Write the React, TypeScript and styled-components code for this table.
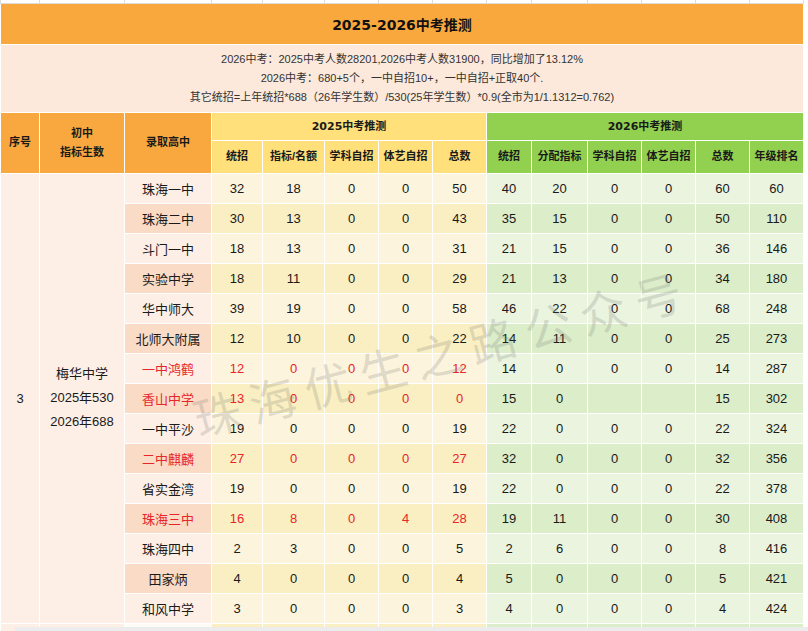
import * as React from "react";
import styled, { createGlobalStyle } from "styled-components";

type Row = {
  school: string;
  hot: boolean;
  y25: (number | string)[];
  y26: (number | string)[];
};

const rows: Row[] = [
  { school: "珠海一中", hot: false, y25: [32, 18, 0, 0, 50], y26: [40, 20, 0, 0, 60, 60] },
  { school: "珠海二中", hot: false, y25: [30, 13, 0, 0, 43], y26: [35, 15, 0, 0, 50, 110] },
  { school: "斗门一中", hot: false, y25: [18, 13, 0, 0, 31], y26: [21, 15, 0, 0, 36, 146] },
  { school: "实验中学", hot: false, y25: [18, 11, 0, 0, 29], y26: [21, 13, 0, 0, 34, 180] },
  { school: "华中师大", hot: false, y25: [39, 19, 0, 0, 58], y26: [46, 22, 0, 0, 68, 248] },
  { school: "北师大附属", hot: false, y25: [12, 10, 0, 0, 22], y26: [14, 11, 0, 0, 25, 273] },
  { school: "一中鸿鹤", hot: true, y25: [12, 0, 0, 0, 12], y26: [14, 0, 0, 0, 14, 287] },
  { school: "香山中学", hot: true, y25: [13, 0, 0, 0, 0], y26: [15, 0, "", "", 15, 302] },
  { school: "一中平沙", hot: false, y25: [19, 0, 0, 0, 19], y26: [22, 0, 0, 0, 22, 324] },
  { school: "二中麒麟", hot: true, y25: [27, 0, 0, 0, 27], y26: [32, 0, 0, 0, 32, 356] },
  { school: "省实金湾", hot: false, y25: [19, 0, 0, 0, 19], y26: [22, 0, 0, 0, 22, 378] },
  { school: "珠海三中", hot: true, y25: [16, 8, 0, 4, 28], y26: [19, 11, 0, 0, 30, 408] },
  { school: "珠海四中", hot: false, y25: [2, 3, 0, 0, 5], y26: [2, 6, 0, 0, 8, 416] },
  { school: "田家炳", hot: false, y25: [4, 0, 0, 0, 4], y26: [5, 0, 0, 0, 5, 421] },
  { school: "和风中学", hot: false, y25: [3, 0, 0, 0, 3], y26: [4, 0, 0, 0, 4, 424] },
];

const widths = [39, 85, 87, 51, 62, 54, 54, 54, 45, 56, 54, 54, 54, 54];

const head25 = ["统招", "指标/名额", "学科自招", "体艺自招", "总数"];
const head26 = ["统招", "分配指标", "学科自招", "体艺自招", "总数", "年级排名"];

const fill = {
  peach: ["#fdefe6", "#f9dbc6"],
  yellow: ["#fdf4dd", "#faefc2"],
  green: ["#eaf4df", "#dcedca"],
};

export default function App() {
  return (
    <Page>
      <GlobalStyle />
      <Sheet>
        <colgroup>
          {widths.map((w, i) => (
            <col key={i} style={{ width: w }} />
          ))}
        </colgroup>
        <tbody>
          <EdgeRow>
            {widths.map((_, i) => (
              <td key={i} />
            ))}
          </EdgeRow>
          <tr>
            <Title colSpan={14}>2025-2026中考推测</Title>
          </tr>
          <tr>
            <Notes colSpan={14}>
              2026中考：2025中考人数28201,2026中考人数31900，同比增加了13.12%
              <br />
              2026中考：680+5个，一中自招10+，一中自招+正取40个.
              <br />
              其它统招=上年统招*688（26年学生数）/530(25年学生数）*0.9(全市为1/1.1312=0.762)
            </Notes>
          </tr>
          <HeadRow $h={28}>
            <HeadCell $bg="#f9a83f" rowSpan={2}>序号</HeadCell>
            <HeadCell $bg="#f9a83f" rowSpan={2}>
              初中
              <br />
              指标生数
            </HeadCell>
            <HeadCell $bg="#f9a83f" rowSpan={2}>录取高中</HeadCell>
            <GroupCell $bg="#ffe07b" colSpan={5}>2025中考推测</GroupCell>
            <GroupCell $bg="#92d050" colSpan={6}>2026中考推测</GroupCell>
          </HeadRow>
          <HeadRow $h={33}>
            {head25.map((h) => (
              <HeadCell key={"a" + h} $bg="#ffe07b">{h}</HeadCell>
            ))}
            {head26.map((h) => (
              <HeadCell key={"b" + h} $bg="#92d050">{h}</HeadCell>
            ))}
          </HeadRow>
          {rows.map((r, i) => {
            const k = i % 2;
            return (
              <BodyRow key={r.school}>
                {i === 0 && (
                  <>
                    <Cell $bg={fill.peach[0]} rowSpan={rows.length}>3</Cell>
                    <Merged $bg={fill.peach[0]} rowSpan={rows.length}>
                      梅华中学
                      <br />
                      2025年530
                      <br />
                      2026年688
                    </Merged>
                  </>
                )}
                <Cell $bg={fill.peach[k]} $red={r.hot}>{r.school}</Cell>
                {r.y25.map((v, j) => (
                  <Cell key={"a" + j} $bg={fill.yellow[k]} $red={r.hot}>{v}</Cell>
                ))}
                {r.y26.map((v, j) => (
                  <Cell key={"b" + j} $bg={fill.green[k]}>{v}</Cell>
                ))}
              </BodyRow>
            );
          })}
          <BodyRow>
            <Cell $bg={fill.peach[0]} />
            <Cell $bg={fill.peach[0]} />
            <Cell $bg="#fffaf6" />
            {head25.map((h) => (
              <Cell key={"c" + h} $bg={fill.yellow[1]} />
            ))}
            {head26.map((h) => (
              <Cell key={"d" + h} $bg={fill.green[1]} />
            ))}
          </BodyRow>
        </tbody>
      </Sheet>
      <Watermark>珠海优生之路公众号</Watermark>
      <ScrollBar />
    </Page>
  );
}

// styled components
const GlobalStyle = createGlobalStyle`
  html, body {
    margin: 0;
    padding: 0;
    background: #ffffff;
  }
  body {
    font-family: "Liberation Sans", "Noto Sans CJK SC", sans-serif;
    color: #1a1a1a;
  }
`;

const Page = styled.div`
  position: relative;
  width: 808px;
  height: 631px;
  overflow: hidden;
  background: #ffffff;
`;

const Sheet = styled.table`
  width: 803px;
  table-layout: fixed;
  border-collapse: collapse;

  td {
    border: 1px solid #ffffff;
    padding: 0;
    text-align: center;
    vertical-align: middle;
  }
`;

const EdgeRow = styled.tr`
  height: 3px;

  td {
    border: 1px solid #dcdcdc;
    border-top: none;
    background: #ffffff;
  }
`;

const Title = styled.td`
  height: 40px;
  background: #f9a83d;
  font-family: "DejaVu Sans", "Noto Sans CJK SC", sans-serif;
  font-size: 14px;
  font-weight: bold;
  color: #111;
`;

const Notes = styled.td`
  height: 67px;
  background: #fce9db;
  font-size: 11px;
  line-height: 19px;
  color: #333;
`;

const HeadRow = styled.tr<{ $h: number }>`
  height: ${(p) => p.$h}px;
`;

const HeadCell = styled.td<{ $bg: string }>`
  background: ${(p) => p.$bg};
  font-size: 11px;
  font-weight: bold;
  line-height: 19px;
  color: #1a1a1a;
`;

const GroupCell = styled(HeadCell)`
  font-family: "DejaVu Sans", "Noto Sans CJK SC", sans-serif;
`;

const BodyRow = styled.tr`
  height: 30px;
`;

const Cell = styled.td<{ $bg: string; $red?: boolean }>`
  background: ${(p) => p.$bg};
  font-size: 13px;
  color: ${(p) => (p.$red ? "#e8262a" : "#1a1a1a")};
`;

const Merged = styled(Cell)`
  line-height: 24px;
`;

const Watermark = styled.div`
  position: absolute;
  left: 442px;
  top: 352px;
  transform: translate(-50%, -50%) rotate(-15deg);
  white-space: nowrap;
  font-family: "Noto Sans CJK SC", sans-serif;
  font-weight: 400;
  font-size: 47px;
  letter-spacing: 10px;
  color: rgba(100, 100, 100, 0.2);
  pointer-events: none;
`;

const ScrollBar = styled.div`
  position: absolute;
  left: 15px;
  right: 0;
  bottom: 0;
  height: 4px;
  background: #ececec;
`;
